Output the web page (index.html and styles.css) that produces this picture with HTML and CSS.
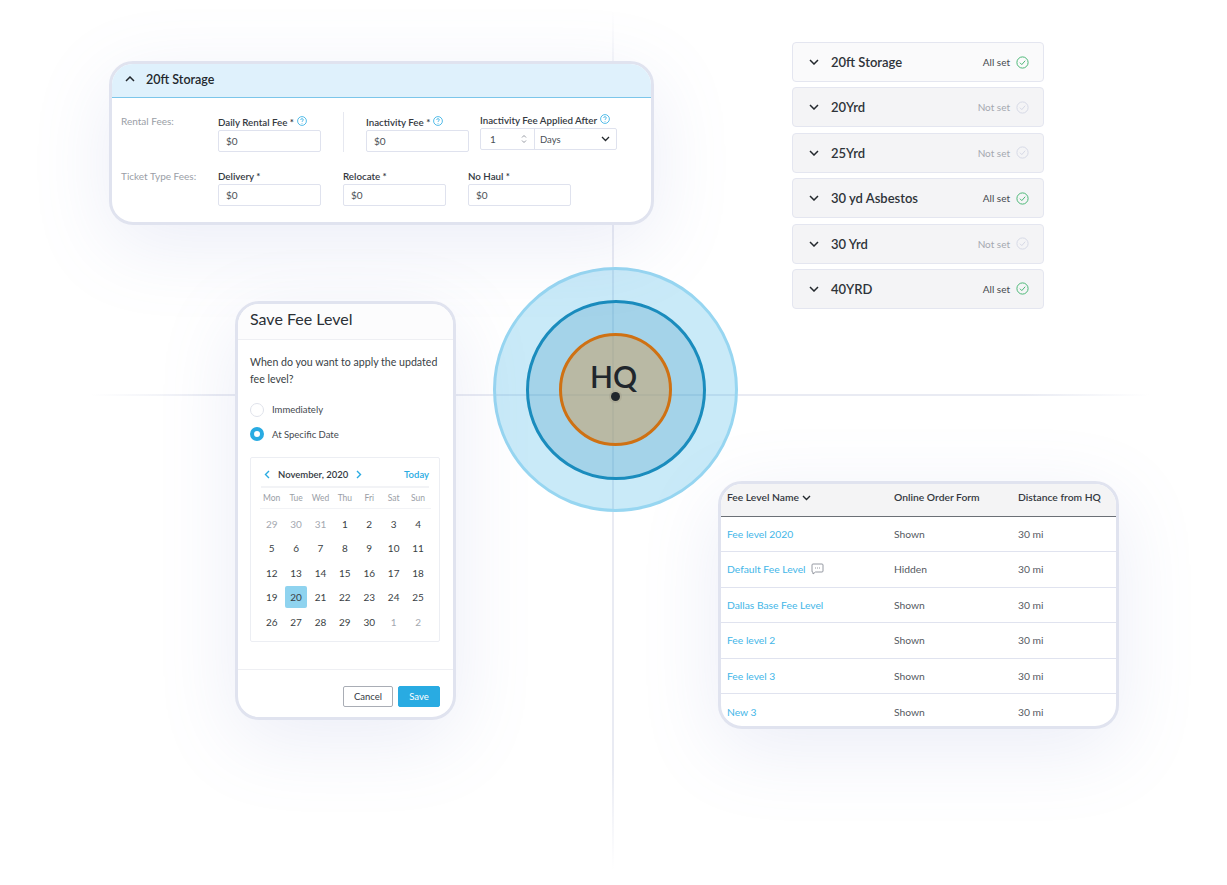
FILE: index.html
```html
<!DOCTYPE html>
<html lang="en">
<head>
    <meta charset="UTF-8">
    <meta name="viewport" content="width=device-width, initial-scale=1.0">
    <title>Fee Levels</title>
    <link rel="stylesheet" href="styles.css">
</head>
<body>
<div class="stage">
    <div class="line line-v"></div>
    <div class="line line-h"></div>

    <!-- HQ rings -->
    <div class="ring ring-outer">
        <div class="ring ring-mid">
            <div class="ring ring-inner">
                <span class="hq">HQ</span>
                <span class="dot"></span>
            </div>
        </div>
    </div>

    <!-- expanded size card -->
    <section class="card storage">
        <header class="storage-head">
            <svg class="chev" width="10" height="6" viewBox="0 0 10 6"><path d="M1 5l4-4 4 4" fill="none" stroke="#23282d" stroke-width="1.5"/></svg>
            <h2>20ft Storage</h2>
        </header>
        <div class="storage-body">
            <div class="fee-row">
                <span class="fee-label">Rental Fees:</span>
                <div class="field">
                    <label>Daily Rental Fee * <svg class="help" width="10" height="10" viewBox="0 0 10 10"><circle cx="5" cy="5" r="4.4" fill="none" stroke="#29abe2" stroke-width=".8"/><path d="M3.7 3.9c0-1.7 2.6-1.7 2.6 0 0 1-1.3 1-1.3 2M5 7v.7" fill="none" stroke="#29abe2" stroke-width=".8"/></svg></label>
                    <div class="input">$0</div>
                </div>
                <div class="divider"></div>
                <div class="field">
                    <label>Inactivity Fee * <svg class="help" width="10" height="10" viewBox="0 0 10 10"><circle cx="5" cy="5" r="4.4" fill="none" stroke="#29abe2" stroke-width=".8"/><path d="M3.7 3.9c0-1.7 2.6-1.7 2.6 0 0 1-1.3 1-1.3 2M5 7v.7" fill="none" stroke="#29abe2" stroke-width=".8"/></svg></label>
                    <div class="input">$0</div>
                </div>
                <div class="field field-after">
                    <label>Inactivity Fee Applied After <svg class="help" width="10" height="10" viewBox="0 0 10 10"><circle cx="5" cy="5" r="4.4" fill="none" stroke="#29abe2" stroke-width=".8"/><path d="M3.7 3.9c0-1.7 2.6-1.7 2.6 0 0 1-1.3 1-1.3 2M5 7v.7" fill="none" stroke="#29abe2" stroke-width=".8"/></svg></label>
                    <div class="combo">
                        <div class="combo-num">
                            <span>1</span>
                            <svg width="6" height="10" viewBox="0 0 6 10"><path d="M1 3.5l2-2 2 2M1 6.5l2 2 2-2" fill="none" stroke="#8a8f98" stroke-width=".9"/></svg>
                        </div>
                        <div class="combo-unit">
                            <span>Days</span>
                            <svg width="9" height="6" viewBox="0 0 9 6"><path d="M1 1l3.5 3.5L8 1" fill="none" stroke="#23282d" stroke-width="1.3"/></svg>
                        </div>
                    </div>
                </div>
            </div>
            <div class="fee-row fee-row-two">
                <span class="fee-label">Ticket Type Fees:</span>
                <div class="field"><label>Delivery *</label><div class="input">$0</div></div>
                <div class="field"><label>Relocate *</label><div class="input">$0</div></div>
                <div class="field"><label>No Haul *</label><div class="input">$0</div></div>
            </div>
        </div>
    </section>

    <!-- collapsed size list -->
    <div class="size-list">
        <div class="size-row first">
            <svg class="chev" width="10" height="6" viewBox="0 0 10 6"><path d="M1 1l4 4 4-4" fill="none" stroke="#23282d" stroke-width="1.5"/></svg>
            <span class="size-name">20ft Storage</span>
            <span class="status ok">All set</span>
            <svg class="check" width="13" height="13" viewBox="0 0 13 13"><circle cx="6.5" cy="6.5" r="5.6" fill="none" stroke="#4cb877"/><path d="M3.9 6.7l1.9 1.9 3.4-3.9" fill="none" stroke="#4cb877"/></svg>
        </div>
        <div class="size-row">
            <svg class="chev" width="10" height="6" viewBox="0 0 10 6"><path d="M1 1l4 4 4-4" fill="none" stroke="#23282d" stroke-width="1.5"/></svg>
            <span class="size-name">20Yrd</span>
            <span class="status">Not set</span>
            <svg class="check" width="13" height="13" viewBox="0 0 13 13"><circle cx="6.5" cy="6.5" r="5.6" fill="none" stroke="#d6d9e6"/><path d="M3.9 6.7l1.9 1.9 3.4-3.9" fill="none" stroke="#d6d9e6"/></svg>
        </div>
        <div class="size-row">
            <svg class="chev" width="10" height="6" viewBox="0 0 10 6"><path d="M1 1l4 4 4-4" fill="none" stroke="#23282d" stroke-width="1.5"/></svg>
            <span class="size-name">25Yrd</span>
            <span class="status">Not set</span>
            <svg class="check" width="13" height="13" viewBox="0 0 13 13"><circle cx="6.5" cy="6.5" r="5.6" fill="none" stroke="#d6d9e6"/><path d="M3.9 6.7l1.9 1.9 3.4-3.9" fill="none" stroke="#d6d9e6"/></svg>
        </div>
        <div class="size-row">
            <svg class="chev" width="10" height="6" viewBox="0 0 10 6"><path d="M1 1l4 4 4-4" fill="none" stroke="#23282d" stroke-width="1.5"/></svg>
            <span class="size-name">30 yd Asbestos</span>
            <span class="status ok">All set</span>
            <svg class="check" width="13" height="13" viewBox="0 0 13 13"><circle cx="6.5" cy="6.5" r="5.6" fill="none" stroke="#4cb877"/><path d="M3.9 6.7l1.9 1.9 3.4-3.9" fill="none" stroke="#4cb877"/></svg>
        </div>
        <div class="size-row">
            <svg class="chev" width="10" height="6" viewBox="0 0 10 6"><path d="M1 1l4 4 4-4" fill="none" stroke="#23282d" stroke-width="1.5"/></svg>
            <span class="size-name">30 Yrd</span>
            <span class="status">Not set</span>
            <svg class="check" width="13" height="13" viewBox="0 0 13 13"><circle cx="6.5" cy="6.5" r="5.6" fill="none" stroke="#d6d9e6"/><path d="M3.9 6.7l1.9 1.9 3.4-3.9" fill="none" stroke="#d6d9e6"/></svg>
        </div>
        <div class="size-row">
            <svg class="chev" width="10" height="6" viewBox="0 0 10 6"><path d="M1 1l4 4 4-4" fill="none" stroke="#23282d" stroke-width="1.5"/></svg>
            <span class="size-name">40YRD</span>
            <span class="status ok">All set</span>
            <svg class="check" width="13" height="13" viewBox="0 0 13 13"><circle cx="6.5" cy="6.5" r="5.6" fill="none" stroke="#4cb877"/><path d="M3.9 6.7l1.9 1.9 3.4-3.9" fill="none" stroke="#4cb877"/></svg>
        </div>
    </div>

    <!-- save dialog -->
    <section class="card dialog">
        <h2 class="dialog-title">Save Fee Level</h2>
        <div class="dialog-body">
            <p class="question">When do you want to apply the updated fee level?</p>
            <div class="radio"><span class="radio-dot"></span>Immediately</div>
            <div class="radio"><span class="radio-dot on"></span>At Specific Date</div>
            <div class="calendar">
                <div class="cal-head">
                    <svg width="6" height="9" viewBox="0 0 6 9"><path d="M5 1L1.5 4.5 5 8" fill="none" stroke="#29abe2" stroke-width="1.4"/></svg>
                    <span class="cal-month">November, 2020</span>
                    <svg width="6" height="9" viewBox="0 0 6 9"><path d="M1 1l3.5 3.5L1 8" fill="none" stroke="#29abe2" stroke-width="1.4"/></svg>
                    <span class="cal-today">Today</span>
                </div>
                <div class="cal-week">
                    <span>Mon</span><span>Tue</span><span>Wed</span><span>Thu</span><span>Fri</span><span>Sat</span><span>Sun</span>
                </div>
                <div class="cal-days">
                    <span class="off">29</span><span class="off">30</span><span class="off">31</span><span>1</span><span>2</span><span>3</span><span>4</span>
                    <span>5</span><span>6</span><span>7</span><span>8</span><span>9</span><span>10</span><span>11</span>
                    <span>12</span><span>13</span><span>14</span><span>15</span><span>16</span><span>17</span><span>18</span>
                    <span>19</span><span class="sel">20</span><span>21</span><span>22</span><span>23</span><span>24</span><span>25</span>
                    <span>26</span><span>27</span><span>28</span><span>29</span><span>30</span><span class="off">1</span><span class="off">2</span>
                </div>
            </div>
        </div>
        <footer class="dialog-foot">
            <button class="btn">Cancel</button>
            <button class="btn btn-save">Save</button>
        </footer>
    </section>

    <!-- fee level table -->
    <section class="card levels">
        <table>
            <thead>
                <tr>
                    <th>Fee Level Name <svg width="9" height="6" viewBox="0 0 9 6"><path d="M1 1l3.5 3.5L8 1" fill="none" stroke="#23282d" stroke-width="1.4"/></svg></th>
                    <th>Online Order Form</th>
                    <th>Distance from HQ</th>
                </tr>
            </thead>
            <tbody>
                <tr><td><a>Fee level 2020</a></td><td>Shown</td><td>30 mi</td></tr>
                <tr><td><a>Default Fee Level</a> <svg class="note" width="13" height="12" viewBox="0 0 13 12"><path d="M2 1h9a1 1 0 0 1 1 1v6a1 1 0 0 1-1 1H4.5L2 11V9.2A1 1 0 0 1 1 8V2a1 1 0 0 1 1-1z" fill="none" stroke="#8a8f98" stroke-width=".9"/><path d="M4 5h1M6 5h1M8 5h1" stroke="#8a8f98" stroke-width=".9"/></svg></td><td>Hidden</td><td>30 mi</td></tr>
                <tr><td><a>Dallas Base Fee Level</a></td><td>Shown</td><td>30 mi</td></tr>
                <tr><td><a>Fee level 2</a></td><td>Shown</td><td>30 mi</td></tr>
                <tr><td><a>Fee level 3</a></td><td>Shown</td><td>30 mi</td></tr>
                <tr><td><a>New 3</a></td><td>Shown</td><td>30 mi</td></tr>
            </tbody>
        </table>
    </section>
</div>
</body>
</html>
```

FILE: styles.css
```css
* {
    box-sizing: border-box;
}
body {
    margin: 0;
    background-color: #fff;
    color: #23282d;
    font-family: Lato, "Open Sans", sans-serif;
    font-size: 10px;
}
h2, p {
    margin: 0;
    font-weight: normal;
}
.stage {
    position: relative;
    width: 1227px;
    height: 885px;
    overflow: hidden;
    background-color: #fff;
}

/* crosshair behind everything */
.line {
    position: absolute;
}
.line-v {
    left: 612px;
    top: 10px;
    width: 2px;
    height: 860px;
    background: linear-gradient(to bottom, rgba(232, 234, 243, 0), #e9ebf3 12%, #e9ebf3 88%, rgba(232, 234, 243, 0));
}
.line-h {
    left: 90px;
    top: 394px;
    width: 1060px;
    height: 2px;
    background: linear-gradient(to right, rgba(232, 234, 243, 0), #e9ebf3 12%, #e9ebf3 88%, rgba(232, 234, 243, 0));
}

/* rings */
.ring {
    display: flex;
    align-items: center;
    justify-content: center;
    border-radius: 50%;
}
.ring-outer {
    position: absolute;
    left: 493px;
    top: 267px;
    width: 245px;
    height: 245px;
    background-color: rgba(41, 171, 226, 0.25);
    border: 3px solid #97d6f1;
}
.ring-mid {
    width: 180px;
    height: 180px;
    background-color: rgba(30, 130, 180, 0.22);
    border: 3px solid #1a8cbd;
}
.ring-inner {
    position: relative;
    width: 113px;
    height: 113px;
    background-color: rgba(214, 150, 70, 0.42);
    border: 3px solid #cf7113;
}
.hq {
    position: absolute;
    left: 28px;
    top: 22px;
    font-size: 30px;
    font-weight: 600;
    line-height: 36px;
    color: #20262c;
}
.dot {
    position: absolute;
    left: 49px;
    top: 56px;
    width: 9px;
    height: 9px;
    border-radius: 50%;
    background-color: #20262c;
    box-shadow: 0 0 0 2px rgba(140, 130, 110, 0.2);
}

/* cards */
.card {
    position: absolute;
    background-color: #fff;
    border: 3px solid #e0e3ef;
    overflow: hidden;
    box-shadow: 0 20px 80px rgba(110, 125, 200, 0.14);
}

/* storage card */
.storage {
    left: 109px;
    top: 61px;
    width: 545px;
    height: 164px;
    border-radius: 24px;
}
.storage-head {
    display: flex;
    align-items: center;
    gap: 11px;
    height: 34px;
    padding: 0 0 3px 13px;
    background-color: #dff1fc;
    border-bottom: 1px solid #7cc6ea;
}
.storage-head h2 {
    font-size: 12.5px;
    font-weight: 600;
    color: #23282d;
}
.storage-body {
    padding: 14px 0 0 9px;
}
.fee-row {
    display: flex;
    align-items: flex-end;
}
.fee-row-two {
    gap: 22px;
    margin-top: 17px;
}
.fee-label {
    align-self: flex-start;
    width: 97px;
    margin-top: 3px;
    color: #9a9ea6;
}
.fee-row-two .fee-label {
    margin-right: -22px;
    margin-top: 1px;
}
.field {
    display: flex;
    flex-direction: column;
    gap: 2px;
    width: 103px;
}
.field label {
    display: flex;
    align-items: center;
    gap: 3px;
    height: 13px;
    font-size: 9.75px;
    font-weight: 600;
    color: #34393f;
    white-space: nowrap;
}
.help {
    margin-top: -2px;
}
.divider {
    width: 1px;
    height: 40px;
    margin: 0 22px;
    background-color: #e6e8f0;
}
.input {
    display: flex;
    align-items: center;
    height: 22px;
    padding-left: 7px;
    border: 1px solid #dfe2ee;
    border-radius: 2px;
    color: #4a4f56;
}
.field-after {
    width: 137px;
    margin-left: 11px;
    margin-bottom: 2px;
}
.combo {
    display: flex;
    height: 22px;
    border: 1px solid #dfe2ee;
    border-radius: 2px;
    color: #4a4f56;
}
.combo-num {
    display: flex;
    align-items: center;
    justify-content: space-between;
    width: 54px;
    padding: 0 7px 0 9px;
    border-right: 1px solid #dfe2ee;
}
.combo-unit {
    display: flex;
    flex: 1;
    align-items: center;
    justify-content: space-between;
    padding: 0 6px 0 5px;
    font-size: 9.5px;
}

/* size list */
.size-list {
    position: absolute;
    left: 792px;
    top: 42px;
    display: flex;
    flex-direction: column;
    gap: 5.4px;
    width: 252px;
}
.size-row {
    display: flex;
    align-items: center;
    height: 40px;
    padding: 0 14px 0 16px;
    background-color: #f4f4f6;
    border: 1px solid #e4e6f0;
    border-radius: 4px;
}
.size-row.first {
    background-color: #fafafb;
}
.size-name {
    flex: 1;
    margin-left: 12px;
    font-size: 13px;
    font-weight: 600;
    color: #2e3339;
}
.status {
    margin-right: 6px;
    color: #a4a8b0;
}
.status.ok {
    color: #44494f;
}

/* dialog */
.dialog {
    left: 235px;
    top: 301px;
    width: 221px;
    height: 419px;
    border-radius: 24px;
}
.dialog-title {
    height: 36px;
    padding: 5px 0 0 12px;
    font-size: 16px;
    line-height: 20px;
    color: #2b3036;
    background-color: #fcfcfd;
    border-bottom: 1px solid #eeeff3;
}
.dialog-body {
    height: 330px;
    padding: 14px 13px 0 12px;
    border-bottom: 1px solid #eeeff3;
}
.question {
    font-size: 10.6px;
    line-height: 16.5px;
    color: #3a3f45;
    margin-bottom: 10.5px;
}
.radio {
    display: flex;
    align-items: center;
    gap: 8px;
    height: 24.5px;
    color: #44494f;
    font-size: 9.5px;
}
.radio-dot {
    width: 14px;
    height: 14px;
    border: 1px solid #dfe2ea;
    border-radius: 50%;
}
.radio-dot.on {
    border: 4px solid #29abe2;
}
.calendar {
    margin-top: 10.5px;
    height: 185px;
    padding: 0 10px;
    border: 1px solid #eceef3;
    border-radius: 2px;
}
.cal-head {
    display: flex;
    align-items: center;
    gap: 8px;
    height: 30px;
    padding: 5px 0 0 3px;
    border-bottom: 2px solid #f2f3f6;
}
.cal-month {
    font-size: 9.5px;
    font-weight: 600;
    color: #34393f;
}
.cal-today {
    margin-left: auto;
    font-size: 9.5px;
    font-weight: 600;
    color: #29abe2;
}
.cal-week {
    display: grid;
    grid-template-columns: repeat(7, 24.4px);
    height: 21px;
    margin: 0 -1.5px;
    padding-bottom: 1px;
    align-items: center;
    text-align: center;
    font-size: 8.5px;
    color: #9a9ea6;
    border-bottom: 1px solid #f2f3f6;
}
.cal-days {
    display: grid;
    grid-template-columns: repeat(7, 24.4px);
    grid-auto-rows: 24.4px;
    margin: 0 -1.5px;
    padding-top: 3px;
    text-align: center;
    line-height: 24.4px;
    color: #3a3f45;
}
.cal-days .off {
    color: #a4a8b0;
}
.cal-days .sel {
    width: 22px;
    height: 22px;
    margin: 1px auto;
    line-height: 22px;
    background-color: #8fd3ef;
    border-radius: 2px;
}
.dialog-foot {
    display: flex;
    justify-content: flex-end;
    gap: 5px;
    padding: 16px 13px 0 0;
}
.btn {
    width: 50px;
    height: 21px;
    padding: 0;
    font-family: inherit;
    font-size: 9.5px;
    color: #34393f;
    background-color: #fff;
    border: 1px solid #a9adb5;
    border-radius: 2px;
}
.btn-save {
    width: 42px;
    color: #fff;
    background-color: #29abe2;
    border-color: #29abe2;
}

/* levels table */
.levels {
    left: 718px;
    top: 481px;
    width: 401px;
    height: 248px;
    border-radius: 24px;
    font-size: 10.3px;
}
.levels table {
    width: 100%;
    border-collapse: collapse;
    table-layout: fixed;
}
.levels th {
    height: 32px;
    padding: 0 0 5px 6px;
    text-align: left;
    font-weight: 600;
    color: #34393f;
    background-color: #f4f4f5;
    border-bottom: 1px solid #6b7076;
}
.levels th:first-child {
    width: 167px;
}
.levels th:nth-child(2) {
    width: 124px;
}
.levels th svg {
    margin-left: 1px;
}
.levels td {
    height: 35.5px;
    padding: 0 0 0 6px;
    color: #55595f;
    border-bottom: 1px solid #e0e3ef;
}
.levels tr:last-child td {
    border-bottom: none;
}
.levels a {
    color: #43b6e8;
}
.note {
    margin-left: 3px;
    vertical-align: -2px;
}
```
